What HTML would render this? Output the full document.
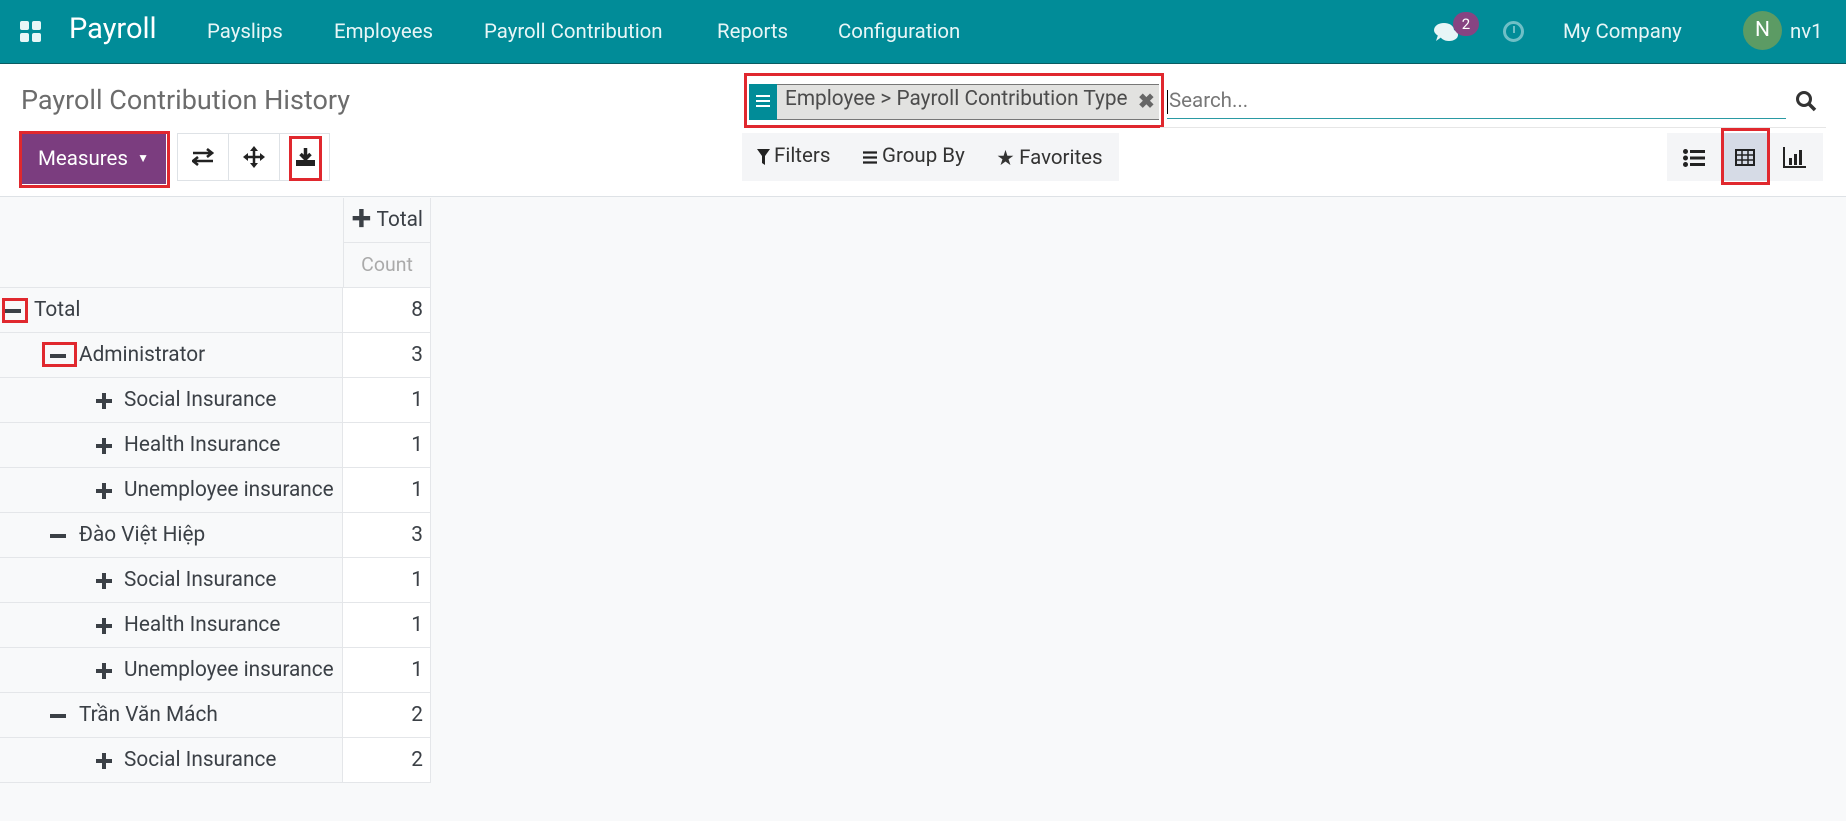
<!DOCTYPE html>
<html><head><meta charset="utf-8"><style>
*{box-sizing:border-box;margin:0;padding:0}
body{width:1846px;height:821px;background:#f8f9fa;font-family:"Roboto","Liberation Sans","Noto Sans CJK SC",sans-serif;color:#4c4c4c;position:relative;overflow:hidden}
.a{position:absolute;white-space:nowrap}
.nav{position:absolute;left:0;top:0;width:1846px;height:64px;background:#018c98;border-bottom:1px solid #0a5c62}
.nav .a{color:#e8f6f7;font-size:20.4px;top:19px}
.cp{position:absolute;left:0;top:64px;width:1846px;height:133px;background:#fff;border-bottom:1px solid #dee2e6}
.row{position:absolute;left:0;width:431px;height:45px;border-bottom:1px solid #e4e6e9;font-size:20.8px;color:#3b4046}
.row .l{position:absolute;left:0;top:0;width:343px;height:44px;background:#f8f9fa;border-right:1px solid #e4e6e9}
.row .v{position:absolute;left:343px;top:0;width:88px;height:44px;background:#fff;text-align:right;padding-right:7px;line-height:44px;border-right:1px solid #e4e6e9}
.row .t{position:absolute;top:0;line-height:44px}
.pl{position:absolute;top:15px;width:16px;height:16px}
.pl:before{content:"";position:absolute;left:0;top:6px;width:16px;height:4px;background:#3b4046}
.pl.p:after{content:"";position:absolute;left:6px;top:0;width:4px;height:16px;background:#3b4046}
.red{position:absolute;border:3px solid #e0282e}
</style></head><body>
<div class="nav">
 <svg class="a" style="left:20px;top:21px" width="22" height="22"><rect x="0" y="0" width="9" height="9" rx="2" fill="#e8f6f7"/><rect x="12" y="0" width="9" height="9" rx="2" fill="#e8f6f7"/><rect x="0" y="12" width="9" height="9" rx="2" fill="#e8f6f7"/><rect x="12" y="12" width="9" height="9" rx="2" fill="#e8f6f7"/></svg>
 <div class="a" style="left:69px;top:12px;font-size:29px;color:#fff">Payroll</div>
 <div class="a" style="left:207px">Payslips</div>
 <div class="a" style="left:334px">Employees</div>
 <div class="a" style="left:484px">Payroll Contribution</div>
 <div class="a" style="left:717px">Reports</div>
 <div class="a" style="left:838px">Configuration</div>
 <svg class="a" style="left:1434px;top:22px" width="26" height="22"><ellipse cx="10" cy="8" rx="10" ry="7" fill="#e8f6f7"/><ellipse cx="15" cy="13" rx="9" ry="6" fill="#e8f6f7"/><path d="M4 13 L2 19 L9 14Z" fill="#e8f6f7"/></svg>
 <div class="a" style="left:1453px;top:12px;width:26px;height:24px;border-radius:12px;background:#874482;color:#fff;font-size:15px;text-align:center;line-height:24px">2</div>
 <div class="a" style="left:1503px;top:21px;width:21px;height:21px;border:3px solid #6fbfc6;border-radius:50%"></div>
 <div class="a" style="left:1513px;top:26px;width:2px;height:7px;background:#6fbfc6"></div>
 <div class="a" style="left:1563px">My Company</div>
 <div class="a" style="left:1743px;top:11px;width:39px;height:39px;border-radius:50%;background:#5c9b64;color:#fff;font-size:21px;text-align:center;line-height:39px">N</div>
 <div class="a" style="left:1790px">nv1</div>
</div>
<div class="cp">
 <div class="a" style="left:21px;top:20px;font-size:27px;color:#6c6c6c">Payroll Contribution History</div>
 <div class="a" style="left:22px;top:70px;width:144px;height:50px;background:#7b3d7f;color:#fff;font-size:20.5px;line-height:50px;padding-left:16px">Measures <span style="font-size:12px;position:relative;top:-3px;margin-left:4px">▼</span></div>
 <div class="red" style="left:19px;top:67px;width:151px;height:57px"></div>
 <div class="a" style="left:177px;top:69px;width:153px;height:48px;border:1px solid #dee2e6;background:#fff"></div>
 <div class="a" style="left:228px;top:69px;width:1px;height:48px;background:#dee2e6"></div>
 <div class="a" style="left:279px;top:69px;width:1px;height:48px;background:#dee2e6"></div>
 <svg class="a" style="left:192px;top:84px" width="22" height="18"><path d="M1 5h19M15 1l5 4-5 4M21 13H2M6 9l-5 4 5 4" stroke="#222" stroke-width="2.6" fill="none"/></svg>
 <svg class="a" style="left:243px;top:82px" width="22" height="22"><path d="M11 2v18M2 11h18" stroke="#222" stroke-width="2.5"/><path d="M11 0l-4 5h8zM11 22l-4-5h8zM0 11l5-4v8zM22 11l-5-4v8z" fill="#222"/></svg>
 <svg class="a" style="left:295px;top:83px" width="21" height="20"><path d="M10.5 1v10M5.5 7l5 5 5-5" stroke="#222" stroke-width="3.5" fill="none"/><rect x="1" y="13" width="19" height="6" fill="#222"/></svg>
 <div class="red" style="left:289px;top:72px;width:33px;height:45px"></div>
 <!-- facet -->
 <div class="a" style="left:749px;top:20px;width:410px;height:36px;background:#e2e2e0;border-top:1px solid #777;border-bottom:1px solid #777"></div>
 <div class="a" style="left:749px;top:20px;width:28px;height:36px;background:#018c98"></div>
 <div class="a" style="left:756px;top:31px;width:14px;height:2px;background:#fff;box-shadow:0 5px 0 #fff,0 10px 0 #fff"></div>
 <div class="a" style="left:785px;top:23px;font-size:20.8px;color:#4c4c4c">Employee &gt; Payroll Contribution Type</div>
 <div class="a" style="left:1138px;top:25px;font-size:20px;color:#666;font-weight:bold">✖</div>
 <div class="red" style="left:744px;top:9px;width:420px;height:55px"></div>
 <div class="a" style="left:1167px;top:26px;width:1px;height:24px;background:#000"></div>
 <div class="a" style="left:1169px;top:25px;font-size:20.5px;color:#777">Search...</div>
 <div class="a" style="left:1167px;top:54px;width:619px;height:1px;background:#2a9aa3"></div>
 <div class="a" style="left:1160px;top:63px;width:666px;height:1px;background:#e6e6e6"></div>
 <svg class="a" style="left:1795px;top:26px" width="22" height="22"><circle cx="9" cy="9" r="6.5" stroke="#333" stroke-width="3" fill="none"/><path d="M14 14l6 6" stroke="#333" stroke-width="3.5"/></svg>
 <div class="a" style="left:742px;top:69px;width:377px;height:48px;background:#f4f5f7"></div>
 <svg class="a" style="left:757px;top:85px" width="13" height="16"><path d="M0 0h13l-5 7v9l-3-2v-7z" fill="#222"/></svg>
 <div class="a" style="left:774px;top:80px;font-size:20.5px;color:#333">Filters</div>
 <svg class="a" style="left:863px;top:87px" width="14" height="13"><path d="M0 1.5h14M0 6.5h14M0 11.5h14" stroke="#222" stroke-width="2.2"/></svg>
 <div class="a" style="left:882px;top:80px;font-size:20.5px;color:#333">Group By</div>
 <div class="a" style="left:997px;top:80px;font-size:20.5px;color:#333"><span style="font-size:17px">★</span> Favorites</div>
 <div class="a" style="left:1667px;top:69px;width:156px;height:48px;background:#f4f5f7"></div>
 <div class="a" style="left:1721px;top:69px;width:49px;height:48px;background:#d6dbe6"></div>
 <svg class="a" style="left:1683px;top:85px" width="22" height="18"><g fill="#222"><circle cx="2.5" cy="2.5" r="2.5"/><circle cx="2.5" cy="9" r="2.5"/><circle cx="2.5" cy="15.5" r="2.5"/><rect x="7" y="1" width="15" height="3"/><rect x="7" y="7.5" width="15" height="3"/><rect x="7" y="14" width="15" height="3"/></g></svg>
 <svg class="a" style="left:1735px;top:85px" width="20" height="17"><rect x="1" y="1" width="18" height="15" fill="none" stroke="#222" stroke-width="2"/><path d="M1 6h18M1 11h18M7 1v15M13 1v15" stroke="#222" stroke-width="1.5"/></svg>
 <svg class="a" style="left:1783px;top:82px" width="24" height="22"><path d="M1 1v20h22" stroke="#222" stroke-width="2" fill="none"/><rect x="6" y="12" width="3" height="7" fill="#222"/><rect x="11" y="8" width="3" height="11" fill="#222"/><rect x="16" y="4" width="3" height="15" fill="#222"/></svg>
 <div class="red" style="left:1721px;top:64px;width:49px;height:57px"></div>
</div>
<!-- table header -->
<div class="a" style="left:343px;top:198px;width:88px;height:45px;border-right:1px solid #e4e6e9;border-bottom:1px solid #e4e6e9;border-left:1px solid #e4e6e9;font-size:20.8px;color:#3b4046;line-height:44px;padding-left:7px"><span style="font-weight:bold">✚</span> Total</div>
<div class="a" style="left:343px;top:243px;width:88px;height:45px;border-right:1px solid #e4e6e9;border-bottom:1px solid #e4e6e9;border-left:1px solid #e4e6e9;font-size:19.5px;color:#aaa;line-height:44px;text-align:center">Count</div>
<div class="a" style="left:0;top:287px;width:343px;height:1px;background:#e4e6e9"></div>

<div class="row" style="top:288px"><div class="l"><div class="pl" style="left:5px"></div><div class="t" style="left:34px">Total</div></div><div class="v">8</div></div>
<div class="row" style="top:333px"><div class="l"><div class="pl" style="left:50px"></div><div class="t" style="left:79px">Administrator</div></div><div class="v">3</div></div>
<div class="row" style="top:378px"><div class="l"><div class="pl p" style="left:96px"></div><div class="t" style="left:124px">Social Insurance</div></div><div class="v">1</div></div>
<div class="row" style="top:423px"><div class="l"><div class="pl p" style="left:96px"></div><div class="t" style="left:124px">Health Insurance</div></div><div class="v">1</div></div>
<div class="row" style="top:468px"><div class="l"><div class="pl p" style="left:96px"></div><div class="t" style="left:124px">Unemployee insurance</div></div><div class="v">1</div></div>
<div class="row" style="top:513px"><div class="l"><div class="pl" style="left:50px"></div><div class="t" style="left:79px">Đào Việt Hiệp</div></div><div class="v">3</div></div>
<div class="row" style="top:558px"><div class="l"><div class="pl p" style="left:96px"></div><div class="t" style="left:124px">Social Insurance</div></div><div class="v">1</div></div>
<div class="row" style="top:603px"><div class="l"><div class="pl p" style="left:96px"></div><div class="t" style="left:124px">Health Insurance</div></div><div class="v">1</div></div>
<div class="row" style="top:648px"><div class="l"><div class="pl p" style="left:96px"></div><div class="t" style="left:124px">Unemployee insurance</div></div><div class="v">1</div></div>
<div class="row" style="top:693px"><div class="l"><div class="pl" style="left:50px"></div><div class="t" style="left:79px">Trần Văn Mách</div></div><div class="v">2</div></div>
<div class="row" style="top:738px"><div class="l"><div class="pl p" style="left:96px"></div><div class="t" style="left:124px">Social Insurance</div></div><div class="v">2</div></div>
<div class="red" style="left:2px;top:298px;width:26px;height:25px"></div>
<div class="red" style="left:42px;top:342px;width:35px;height:25px"></div>
</body></html>
